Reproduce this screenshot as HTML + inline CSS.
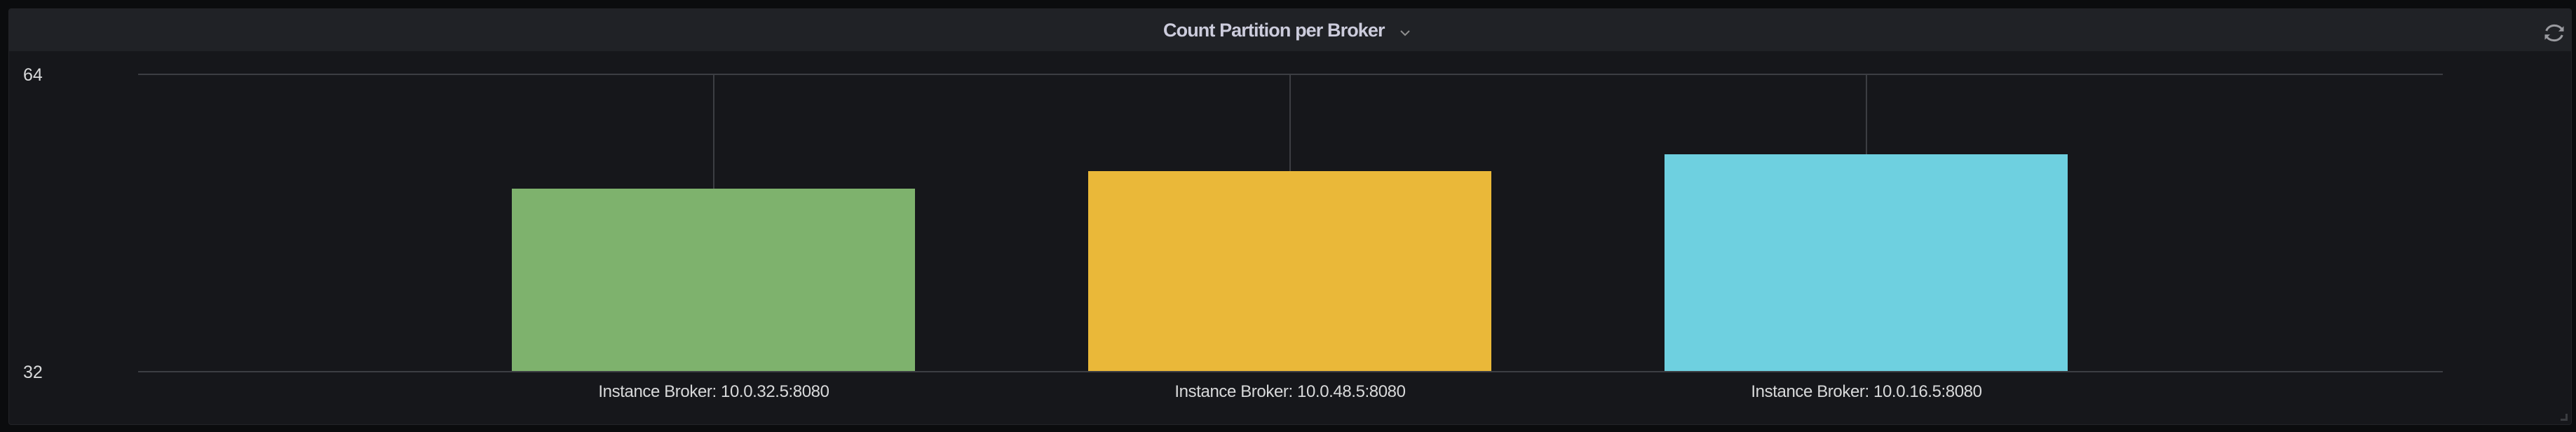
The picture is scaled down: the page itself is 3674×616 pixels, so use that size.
<!DOCTYPE html>
<html><head><meta charset="utf-8"><style>
html,body{margin:0;padding:0;background:#0b0c0e;width:3674px;height:616px;overflow:hidden;font-family:"Liberation Sans",sans-serif}
.panel{position:absolute;left:12px;top:12px;width:3656px;height:594px;background:#16171b;border:1px solid #232428;border-radius:4px;box-sizing:border-box;overflow:hidden}
.hdr{position:absolute;left:0;top:0;width:100%;height:60px;background:#202226}
.t{position:absolute;color:#d8d9da}
.g{position:absolute;background:#3c3e43}
</style></head><body>
<div class="panel">
<div class="hdr"></div>
<div class="t" style="left:1646px;top:15px;font-size:27px;font-weight:bold;letter-spacing:-0.9px;color:#ccccdc">Count Partition per Broker</div>
<svg style="position:absolute;left:1983px;top:29px" width="16" height="12"><path d="M2 2l6 6 6-6" stroke="#8e8e8e" stroke-width="2" fill="none"/></svg>
<svg style="position:absolute;left:3612px;top:16px" width="36" height="36" viewBox="0 0 24 24"><path d="M4.5 10a8 7 0 0 1 15-1M19.5 14a8 7 0 0 1-15 1" stroke="#9a9ba0" stroke-width="2" fill="none"/><path d="M21 5.5v5h-5z M3 18.5v-5h5z" fill="#9a9ba0"/></svg>
<div class="t" style="left:20px;top:80px;font-size:25px">64</div>
<div class="t" style="left:20px;top:504px;font-size:25px">32</div>
</div>
<div class="g" style="left:197px;top:105px;width:3287px;height:2px"></div>
<div class="g" style="left:197px;top:529px;width:3287px;height:2px"></div>
<div class="g" style="left:1017px;top:105px;width:2px;height:165px"></div>
<div class="g" style="left:1839px;top:105px;width:2px;height:140px"></div>
<div class="g" style="left:2661px;top:105px;width:2px;height:116px"></div>
<div style="position:absolute;left:730px;top:269px;width:575px;height:260px;background:#7eb26d"></div>
<div style="position:absolute;left:1552px;top:244px;width:575px;height:285px;background:#eab839"></div>
<div style="position:absolute;left:2374px;top:220px;width:575px;height:309px;background:#6ed0e0"></div>
<div class="t" style="left:718px;width:600px;text-align:center;top:545px;font-size:24px;letter-spacing:-0.4px">Instance Broker: 10.0.32.5:8080</div>
<div class="t" style="left:1540px;width:600px;text-align:center;top:545px;font-size:24px;letter-spacing:-0.4px">Instance Broker: 10.0.48.5:8080</div>
<div class="t" style="left:2362px;width:600px;text-align:center;top:545px;font-size:24px;letter-spacing:-0.4px">Instance Broker: 10.0.16.5:8080</div>
<div style="position:absolute;left:3652px;top:597px;width:10px;height:3px;background:#3a3c40"></div>
<div style="position:absolute;left:3659px;top:590px;width:3px;height:10px;background:#3a3c40"></div>
</body></html>
